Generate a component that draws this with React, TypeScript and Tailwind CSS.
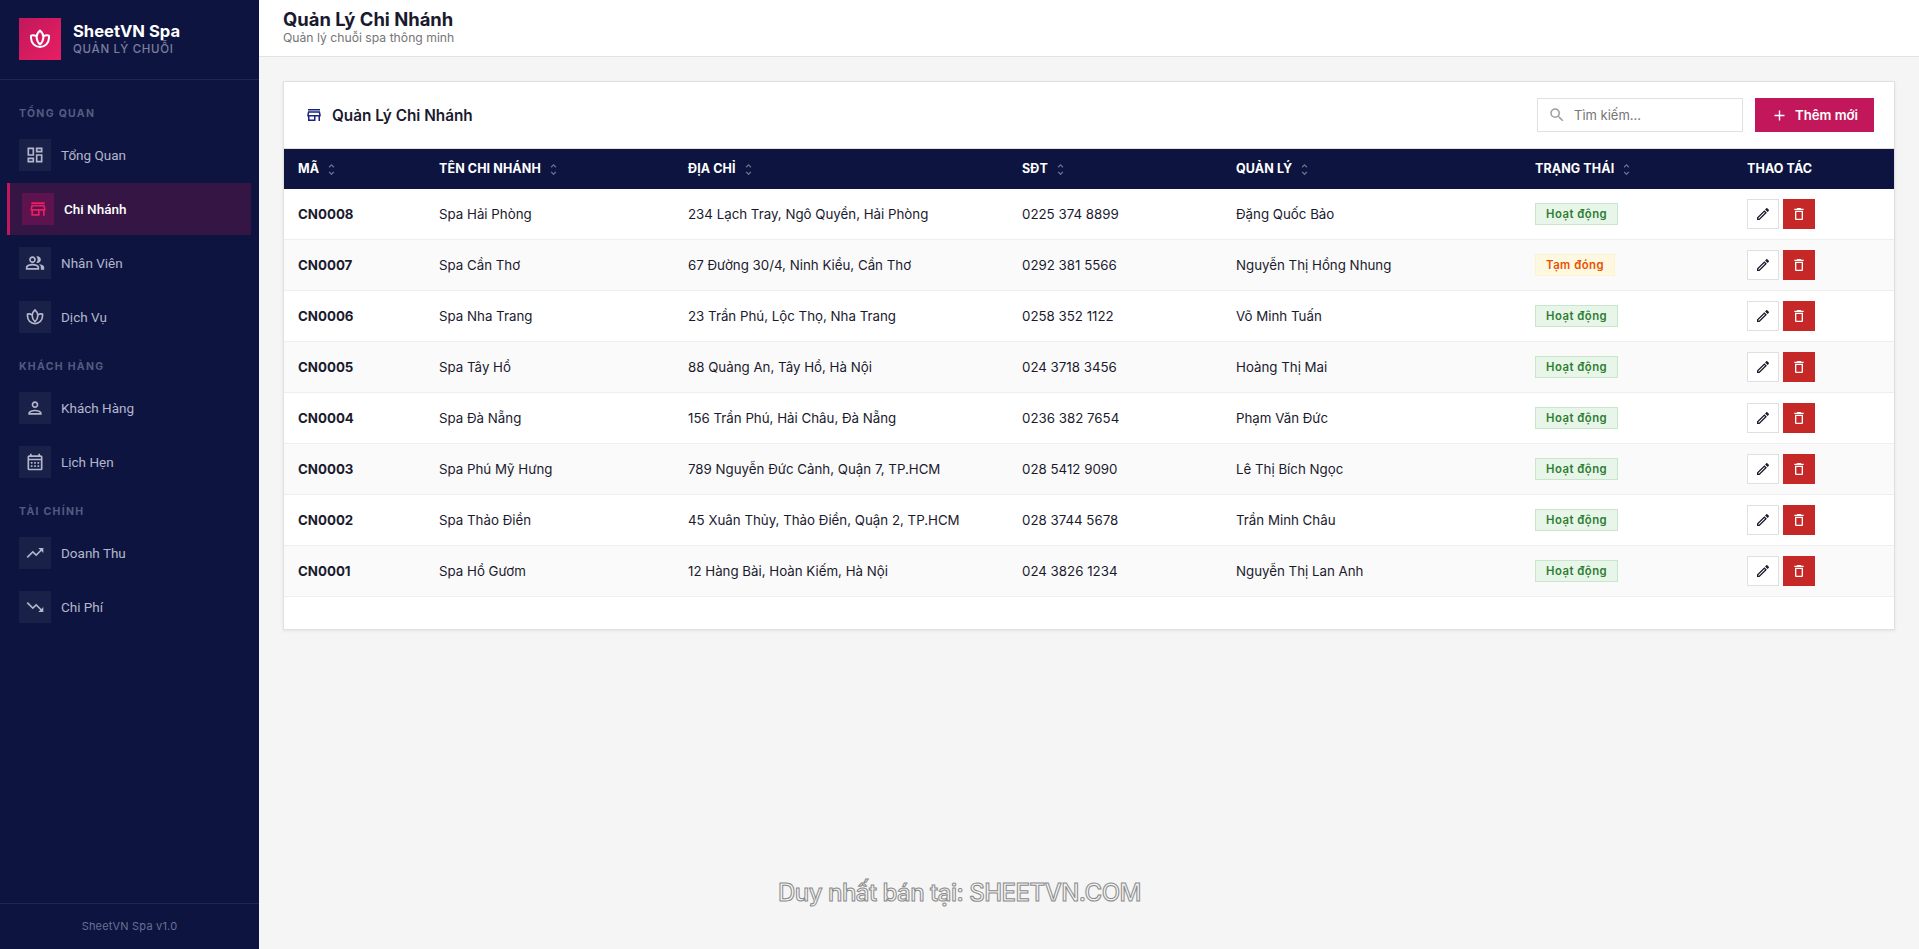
import React from "react";
import {
  MdOutlineDashboard, MdOutlineStore, MdOutlinePeopleAlt, MdOutlinePerson, MdOutlineCalendarMonth,
  MdTrendingUp, MdTrendingDown, MdUnfoldMore, MdSearch, MdAdd, MdOutlineEdit, MdOutlineDelete,
} from "react-icons/md";

function Lotus({ className }: { className?: string }) {
  return (
    <svg viewBox="0 0 24 24" fill="none" stroke="currentColor" strokeWidth="2" strokeLinejoin="round" className={className}>
      <path d="M12 3.5c-2.2 2-3.4 4.2-3.4 6.6 0 3 1.4 5.6 3.4 7.4 2-1.8 3.4-4.4 3.4-7.4 0-2.4-1.2-4.6-3.4-6.6z" />
      <path d="M8.7 9.2C6.6 8.3 4.6 8.1 3 8.6c0 .9 0 1.6 0 2.2 0 5.200 4 9.200 9 9.200s9-4 9-9.200c0-.6 0-1.300 0-2.200-1.600-.5-3.600-.3-5.700.6" />
    </svg>
  );
}

const groups = [
  { title: "TỔNG QUAN", cls: "mt-[26px]", items: [
    { label: "Tổng Quan", Icon: MdOutlineDashboard },
    { label: "Chi Nhánh", Icon: MdOutlineStore, active: true },
    { label: "Nhân Viên", Icon: MdOutlinePeopleAlt },
    { label: "Dịch Vụ", Icon: Lotus },
  ]},
  { title: "KHÁCH HÀNG", cls: "mt-[16px]", items: [
    { label: "Khách Hàng", Icon: MdOutlinePerson },
    { label: "Lịch Hẹn", Icon: MdOutlineCalendarMonth },
  ]},
  { title: "TÀI CHÍNH", cls: "mt-[16px]", items: [
    { label: "Doanh Thu", Icon: MdTrendingUp },
    { label: "Chi Phí", Icon: MdTrendingDown },
  ]},
];

const rows = [
  ["CN0008", "Spa Hải Phòng", "234 Lạch Tray, Ngô Quyền, Hải Phòng", "0225 374 8899", "Đặng Quốc Bảo", true],
  ["CN0007", "Spa Cần Thơ", "67 Đường 30/4, Ninh Kiều, Cần Thơ", "0292 381 5566", "Nguyễn Thị Hồng Nhung", false],
  ["CN0006", "Spa Nha Trang", "23 Trần Phú, Lộc Thọ, Nha Trang", "0258 352 1122", "Võ Minh Tuấn", true],
  ["CN0005", "Spa Tây Hồ", "88 Quảng An, Tây Hồ, Hà Nội", "024 3718 3456", "Hoàng Thị Mai", true],
  ["CN0004", "Spa Đà Nẵng", "156 Trần Phú, Hải Châu, Đà Nẵng", "0236 382 7654", "Phạm Văn Đức", true],
  ["CN0003", "Spa Phú Mỹ Hưng", "789 Nguyễn Đức Cảnh, Quận 7, TP.HCM", "028 5412 9090", "Lê Thị Bích Ngọc", true],
  ["CN0002", "Spa Thảo Điền", "45 Xuân Thủy, Thảo Điền, Quận 2, TP.HCM", "028 3744 5678", "Trần Minh Châu", true],
  ["CN0001", "Spa Hồ Gươm", "12 Hàng Bài, Hoàn Kiếm, Hà Nội", "024 3826 1234", "Nguyễn Thị Lan Anh", true],
] as const;

const heads = [
  ["MÃ", "w-[141px]"], ["TÊN CHI NHÁNH", "w-[249px]"], ["ĐỊA CHỈ", "w-[334px]"], ["SĐT", "w-[214px]"],
  ["QUẢN LÝ", "w-[299px]"], ["TRẠNG THÁI", "w-[212px]"], ["THAO TÁC", ""],
];

const td = "border-b border-[#eeeeee] px-[14px]";
const tdText = "border-b border-[#eeeeee] px-[14px] pt-[2px]";

export default function App() {
  return (
    <div className="flex h-[949px] overflow-hidden bg-[#f5f5f5] font-['Inter','Noto_Sans',sans-serif] text-[#1a1a2e]">
      <aside className="flex w-[259px] shrink-0 flex-col bg-[#0d1440]">
        <div className="flex h-[80px] items-center gap-3 border-b border-[#1f2650] px-[19px] pb-[2px]">
          <div className="flex h-[42px] w-[42px] items-center justify-center bg-gradient-to-br from-[#c2185b] to-[#e91e63]">
            <Lotus className="h-[24px] w-[24px] text-white" />
          </div>
          <div>
            <div className="text-[16.6px] font-bold leading-[20px] text-white">SheetVN Spa</div>
            <div className="text-[11.5px] font-medium leading-[16px] tracking-[0.7px] text-[#7a7f9e]">QUẢN LÝ CHUỖI</div>
          </div>
        </div>
        <nav className="flex-1">
          {groups.map((g) => (
            <div key={g.title} className={g.cls}>
              <div className="mb-[7px] px-[19px] text-[10.5px] font-bold leading-[16px] tracking-[1.3px] text-[#555b80]">{g.title}</div>
              {g.items.map(({ label, Icon, active }: any) =>
                active ? (
                  <div key={label} className="ml-[7px] mr-[8px] mb-[2px] flex h-[52px] items-center gap-[10px] border-l-[3px] border-[#c2185b] bg-[#341544] pl-[12px] font-['Roboto',sans-serif]">
                    <div className="flex h-8 w-8 items-center justify-center bg-[#5c134e]">
                      <Icon className="text-[20px] text-[#e91e63]" />
                    </div>
                    <span className="text-[13.5px] font-medium text-white">{label}</span>
                  </div>
                ) : (
                  <div key={label} className="mb-[2px] flex h-[52px] items-center gap-[10px] px-[19px] font-['Roboto',sans-serif]">
                    <div className="flex h-8 w-8 items-center justify-center bg-[#1a2148]">
                      <Icon className="h-[20px] w-[20px] text-[#b4b7cb]" />
                    </div>
                    <span className="text-[13.5px] text-[#b4b7cb]">{label}</span>
                  </div>
                )
              )}
            </div>
          ))}
        </nav>
        <div className="flex h-[46px] items-center justify-center border-t border-[#1f2650] text-[11px] tracking-[0.2px] text-[#6b7092]">SheetVN Spa v1.0</div>
      </aside>

      <main className="flex min-w-0 flex-1 flex-col">
        <header className="h-[57px] border-b border-[#e2e2e2] bg-white px-[24px] pt-[9px]">
          <h1 className="text-[18.4px] font-bold leading-[20px] text-[#1a1a2e]">Quản Lý Chi Nhánh</h1>
          <p className="text-[12.2px] leading-[17px] text-[#757575]">Quản lý chuỗi spa thông minh</p>
        </header>
        <div className="p-[24px]">
          <section className="h-[549px] border border-[#e0e0e0] bg-white shadow-[0_1px_3px_rgba(0,0,0,0.08)]">
            <div className="flex h-[67px] items-center justify-between border-b border-[#e0e0e0] pl-[21px] pr-[20px]">
              <div className="flex items-center gap-[9px] text-[15.3px] font-semibold">
                <MdOutlineStore className="text-[18px] text-[#1a237e]" />
                <span className="pt-[2px]">Quản Lý Chi Nhánh</span>
              </div>
              <div className="flex items-center gap-3">
                <div className="flex h-[34px] w-[206px] items-center gap-[8px] border border-[#e0e0e0] bg-white pl-[10px]">
                  <MdSearch className="text-[18px] text-[#9e9e9e]" />
                  <span className="pt-[1px] text-[13px] text-[#757575]">Tìm kiếm...</span>
                </div>
                <button className="flex h-[34px] w-[119px] items-center justify-center gap-[7px] bg-[#c2185b] text-[13.2px] font-semibold text-white">
                  <MdAdd className="text-[17px]" />
                  <span className="pt-[1px]">Thêm mới</span>
                </button>
              </div>
            </div>
            <table className="w-full table-fixed border-separate border-spacing-0">
              <thead>
                <tr className="h-[40px] bg-[#0d1440] text-white">
                  {heads.map(([h, w]) => (
                    <th key={h} className={`${w} px-[14px] text-left text-[12.5px] font-bold tracking-[0.1px]`}>
                      <span className="inline-flex items-center gap-[5px]">
                        {h}
                        {h !== "THAO TÁC" && <MdUnfoldMore className="text-[15px] text-[#6b6f8c]" />}
                      </span>
                    </th>
                  ))}
                </tr>
              </thead>
              <tbody>
                {rows.map((r, i) => (
                  <tr key={r[0]} className={`h-[51px] text-[13.3px] ${i % 2 ? "bg-[#fafafa]" : "bg-white"}`}>
                    <td className={`${tdText} font-bold`}>{r[0]}</td>
                    <td className={tdText}>{r[1]}</td>
                    <td className={tdText}>{r[2]}</td>
                    <td className={tdText}>{r[3]}</td>
                    <td className={tdText}>{r[4]}</td>
                    <td className={td}>
                      {r[5] ? (
                        <span className="inline-flex h-[22px] items-center border border-[#c8e6c9] bg-[#e8f5e9] px-[10px] text-[11.3px] font-semibold tracking-[0.5px] text-[#2e7d32]">Hoạt động</span>
                      ) : (
                        <span className="inline-flex h-[22px] items-center border border-[#fff3cd] bg-[#fff8e1] px-[10px] text-[11.3px] font-semibold tracking-[0.5px] text-[#e65100]">Tạm đóng</span>
                      )}
                    </td>
                    <td className={td}>
                      <div className="flex gap-1">
                        <button className="flex h-[30px] w-[32px] items-center justify-center border border-[#e0e0e0] bg-white text-[#1a1a2e]"><MdOutlineEdit className="text-[16px]" /></button>
                        <button className="flex h-[30px] w-[32px] items-center justify-center bg-[#c62828] text-white"><MdOutlineDelete className="text-[16px]" /></button>
                      </div>
                    </td>
                  </tr>
                ))}
              </tbody>
            </table>
          </section>
        </div>
      </main>
      <div className="pointer-events-none absolute left-[778px] top-[875px] text-[24px] font-medium tracking-[-0.5px] text-[#f5f5f5] [-webkit-text-stroke:1px_#8a8a8a]">Duy nhất bán tại: SHEETVN.COM</div>
    </div>
  );
}
